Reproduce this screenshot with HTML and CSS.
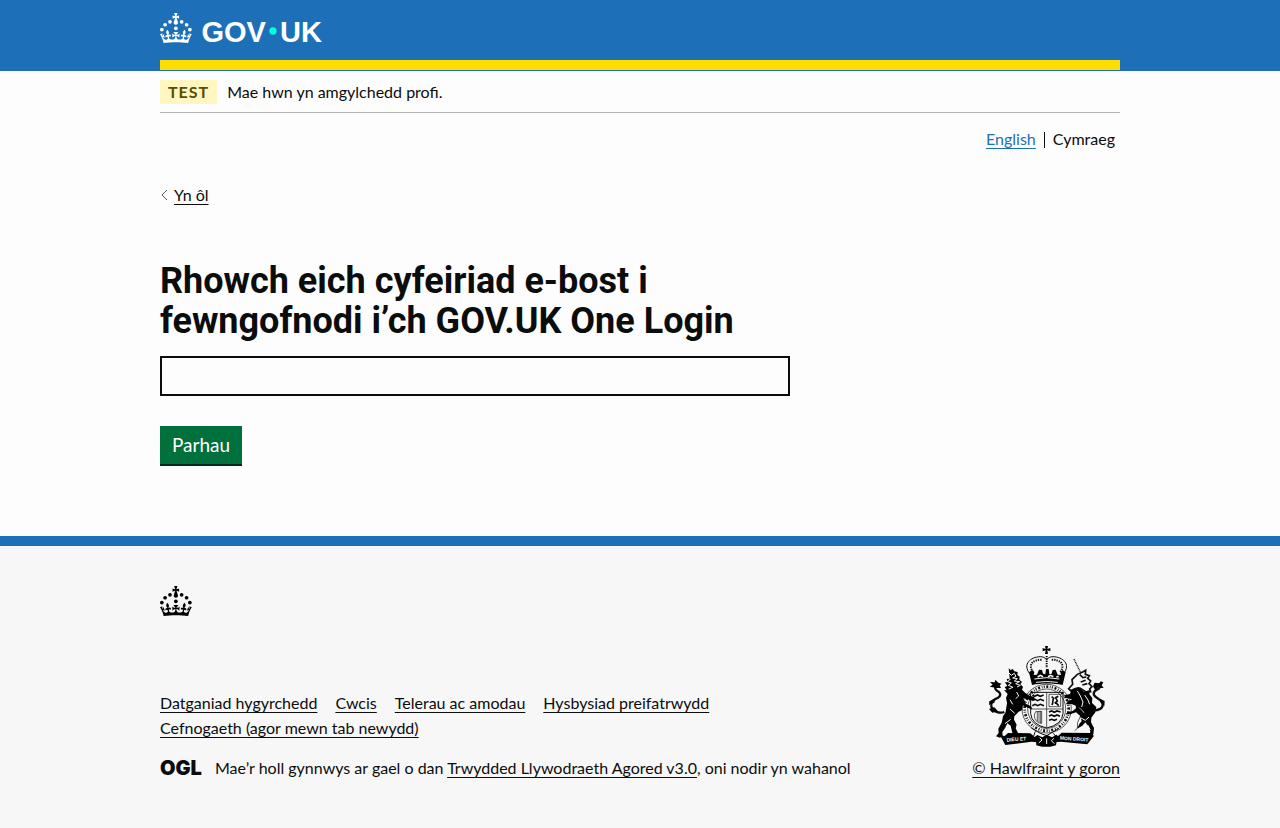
FILE: index.html
```html
<!DOCTYPE html>
<html lang="cy">
<head>
<meta charset="utf-8">
<meta name="viewport" content="width=device-width, initial-scale=1">
<title>Rhowch eich cyfeiriad e-bost - GOV.UK One Login</title>
<link rel="stylesheet" href="styles.css">
</head>
<body>
<svg class="symbols" aria-hidden="true">
  <symbol id="crown" viewBox="0 0 64 60">
    <circle cx="20" cy="17.6" r="3.7"/><circle cx="10.2" cy="23.5" r="3.7"/><circle cx="3.7" cy="33.2" r="3.7"/><circle cx="31.7" cy="30.6" r="3.7"/><circle cx="43.3" cy="17.6" r="3.7"/><circle cx="53.2" cy="23.5" r="3.7"/><circle cx="59.7" cy="33.2" r="3.7"/>
    <path d="M33.1,9.8c.2-.1.3-.3.5-.5l4.6,2.4v-6.8l-4.6,1.5c-.1-.2-.3-.3-.5-.5l1.9-5.9h-6.7l1.9,5.9c-.2.1-.3.3-.5.5l-4.6-1.5v6.8l4.6-2.4c.1.2.3.3.5.5l-2.6,8c-.9,2.8,1.2,5.7,4.1,5.7h0c3,0,5.1-2.9,4.1-5.7l-2.6-8ZM37,37.9s-3.4,3.8-4.1,6.1c2.2,0,4.2-.5,6.4-2.8l-.7,8.5c-2-2.8-4.4-4.1-5.7-3.8.1,3.1.5,6.7,5.8,7.2,3.7.3,6.7-1.5,7-3.8.4-2.6-2-4.3-3.7-1.6-1.4-4.5,2.4-6.1,4.9-3.2-1.9-4.5-1.8-7.7,2.4-10.9,3,4,2.6,7.3-1.2,11.1,2.4-1.3,6.2,0,4,4.6-1.2-2.8-3.7-2.2-4.2.2-.3,1.7.7,3.7,3,4.2,1.9.3,4.7-.9,7-5.9-1.3,0-2.4.7-3.9,1.7l2.4-8c.6,2.3,1.4,3.7,2.2,4.5.6-1.6.5-2.8,0-5.3l5,1.8c-2.6,3.6-5.2,8.7-7.3,17.5-7.4-1.1-15.7-1.7-24.5-1.7h0c-8.8,0-17.1.6-24.5,1.7-2.1-8.9-4.7-13.9-7.3-17.5l5-1.8c-.5,2.5-.6,3.7,0,5.3.8-.8,1.6-2.3,2.2-4.5l2.4,8c-1.5-1-2.6-1.7-3.9-1.7,2.3,5,5.2,6.2,7,5.9,2.3-.4,3.3-2.4,3-4.2-.5-2.4-3-3.1-4.2-.2-2.2-4.6,1.6-6,4-4.6-3.7-3.7-4.2-7.1-1.2-11.1,4.2,3.2,4.3,6.4,2.4,10.9,2.5-2.8,6.3-1.3,4.9,3.2-1.8-2.7-4.1-1-3.7,1.6.3,2.3,3.3,4.1,7,3.8,5.4-.5,5.7-4.2,5.8-7.2-1.3-.2-3.7,1-5.7,3.8l-.7-8.5c2.2,2.3,4.2,2.7,6.4,2.8-.7-2.3-4.1-6.1-4.1-6.1h10.6Z"/>
  </symbol>
</svg>
<header class="header">
  <div class="container header-inner">
    <a class="header-link" href="#" aria-label="GOV.UK">
      <svg class="logo" viewBox="0 0 324 60">
        <use href="#crown" width="64" height="60"/>
        <text class="logo-text" x="83" y="57">GOV</text>
        <circle class="logo-dot" cx="226" cy="36" r="7.3"/>
        <text class="logo-text" x="240" y="57">UK</text>
      </svg>
    </a>
  </div>
</header>
<div class="container">
  <div class="phase">
    <strong class="tag">TEST</strong>
    <span>Mae hwn yn amgylchedd profi.</span>
  </div>
  <nav class="languages" aria-label="Dewis iaith">
    <a class="language" href="#" lang="en">English</a>
    <span class="language language-current">Cymraeg</span>
  </nav>
  <a class="back" href="#">
    <svg class="back-icon" viewBox="0 0 8 12" aria-hidden="true"><path d="M7 1 2 6l5 5"/></svg>
    <span class="link">Yn ôl</span>
  </a>
  <main class="main">
    <form>
      <h1 class="title"><label for="email">Rhowch eich cyfeiriad e-bost i fewngofnodi i’ch GOV.UK One Login</label></h1>
      <input class="input" id="email" name="email" type="email">
      <button class="button" type="button">Parhau</button>
    </form>
  </main>
</div>
<footer class="footer">
  <div class="container">
    <svg class="footer-crown" aria-hidden="true"><use href="#crown"/></svg>
    <div class="meta">
      <div class="meta-main">
        <ul class="links">
          <li><a class="link" href="#">Datganiad hygyrchedd</a></li>
          <li><a class="link" href="#">Cwcis</a></li>
          <li><a class="link" href="#">Telerau ac amodau</a></li>
          <li><a class="link" href="#">Hysbysiad preifatrwydd</a></li>
          <li><a class="link" href="#">Cefnogaeth (agor mewn tab newydd)</a></li>
        </ul>
        <div class="licence">
          <span class="ogl">OGL</span>
          <span>Mae’r holl gynnwys ar gael o dan <a class="link" href="#">Trwydded Llywodraeth Agored v3.0</a>, oni nodir yn wahanol</span>
        </div>
      </div>
      <div class="copyright">
        <svg class="arms" viewBox="18 15 375 306" aria-hidden="true">
          <!-- crown -->
          <path d="M201 18h9l-2 9 9-3v10l-9-3 2 11h-9l2-11-9 3V24l9 3z"/>
          <path class="line" d="M155 101C133 72 157 51 187 50c8 0 14 3 19 9 5-6 11-9 19-9 30 1 54 22 32 51"/>
          <path class="dots" d="M165 96c-16-24 1-37 26-37M247 96c16-24-1-37-26-37M206 48v36"/>
          <path d="m153 97 9-7 7 7-2 8 10-1 6-15 9 1 3 11 7 2 2-16h8l2 16 7-2 3-11 9-1 6 15 10 1-2-8 7-7 9 7-9 38c-27-6-65-6-92 0z"/>
          <path class="light" d="M169 117q37-8 75 0M174 127q33-5 65 0"/>
          <path class="gaps" d="m179 111 8-5 8 4m15 0 8-4 8 4m9 1 7-2"/>
          <!-- garter and shield -->
          <ellipse class="garter" cx="206" cy="206" rx="74" ry="73"/>
          <ellipse class="garter-text" cx="206" cy="206" rx="66" ry="66"/>
          <ellipse class="thin" cx="206" cy="206" rx="57" ry="59"/>
          <path class="shield" d="M158 157h97v64q-3 33-49 43-45-10-48-43z"/>
          <path class="thin" d="M206 157v105M158 207h97"/>
          <path class="charge" d="m163 166 7 3 8-4 9 4 10-4M163 181l8-3 8 4 8-4 11 4M163 197l8-4 8 4 8-4 11 4"/>
          <path class="thin" d="M213 163h35v37h-35z"/>
          <path class="charge" d="M222 195c4-8 1-14 5-20l-6-5m9 20 8-7-5-10 8-4M233 187l9 10"/>
          <path class="thin" d="M173 215c-5 8-5 17 0 26q7 9 18 9v-36zM178 215v29m5-30v33m5-33v36"/>
          <path class="charge" d="m213 216 8-3 8 4 8-4 11 3M213 228l8-3 8 4 8-4 9 4M213 241l8-3 8 3 8-3"/>
          <!-- lion -->
          <path d="m92 84 6 7 6-5 5 8 10 2-1 9 7 5-1 9 8 7-5 6 8 9-3 8 10 10 14 9 12 3 4 9-8 2-19-5-9-3 8 18 15 7 4 8-11-2-18-9-1 14-11 5-13 14-1 10 8 15-3 11 9 18 9 8-11 5-14-7-5-19-3-13-10-7-7 15-8 11 1 12-8 5-12-4 8-10-1-13 10-18 4-19 8-13 4-28-3-14 5-12-11-12 8 1-6-10 8-3-7-11 8-1-3-10 9-1z"/>
          <path class="light" d="m93 99 7 7 9-6 5 9-10 5 14 2-9 7 16 2-12 6 14 5-10 5m-32-42 8 9-7 6 11 4-9 7 12 4-9 7 14 6-13 5m24 9 6 12-9 8m-17 3 8 14m-8 14 14 13m-12 18-17 13m5-65-8 25"/>
          <path class="tail" d="M79 216c-14 5-35-1-39-16-3-17 8-20 20-27 11-7 7-16-2-20-8-5-9-13-2-20"/>
          <path d="M56 144 35 140l9-6-8-8 14 1 2-8 9 9 10 3-6 5 4 8zM34 184l18-9-3 13-16 7zM33 207l16-5 11 12-17 4z"/>
          <!-- unicorn -->
          <path class="horn" d="m288 57 21 43"/>
          <path class="charge" d="m282 119 16-16 16-7 9-5-1 12 12 4-5 8 9 8-5 8 9 9-7 7 3 8-14 1-18-12-14 2-14 6-6-6 12-13z"/>
          <path class="charge" d="m305 104 10 9 10-2m-17 15 15-5m-10 14 15-4"/>
          <path d="m280 150 21-9 17 14 18-5-2 13 9 11-1 15 13 12-3 16-12 16-1 14 9 17-2 19-13 8 4-16-4-13-11-15-9 10-16 9 7-14 7-9-5-16-12-10-17 6-15 0 7-6 15-4 10-8-1-8-12-5-17 1 5-10 14-5-24-5 1-7 16-4z"/>
          <path class="light" d="m298 153 9 15 8 18-4 15m9-36 10 15 5 13m-31 10 14 15m-9 16 13 7 11-10m-4 24 8 15"/>
          <path class="thin" d="M292 150c14 13 8 32 10 48l11 18-14 31-1 18-8 7"/>
          <path class="tail" d="M345 211c15 1 29-5 29-17 0-14-14-17-22-24-9-8-4-17 5-21 9-3 11-10 4-16"/>
          <path d="m345 139 5-11 14 2 4-6 8 3-5 9 6 8-19-1-5 9zM366 176l14 7-1 16-12-12z"/>
          <!-- motto and plinth -->
          <path d="M66 286l14 2 10-9 67 1 14 12 7 15-17-2-79 10zM344 279l-93-1-15 14-6 15 18-2 80 8 19-24z"/>
          <text class="motto" transform="rotate(-4 86 306)" x="86" y="305">DIEU ET</text>
          <text class="motto" transform="rotate(4 247 300)" x="245" y="299">MON DROIT</text>
          <path class="line" d="m160 264 27 16 19 7 37-22M172 274l-5 14m59-8 9 11"/>
          <path d="m166 294 12-9 15 7 13-8 16 8 13-8 12 10-11 10-2 12-17 4h-25l-17-4-1-12z"/>
          <path class="light" d="m185 293 7 7-10 9m24-14v17m22-17-8 7 9 9"/>
        </svg>
        <a class="link" href="#">© Hawlfraint y goron</a>
      </div>
    </div>
  </div>
</footer>
</body>
</html>
```
FILE: styles.css
```css
* { box-sizing: border-box; }
body {
  margin: 0;
  background: #fdfdfd;
  color: #0b0c0c;
  font: 16px/20px Lato, "Liberation Sans", sans-serif;
}
.symbols { position: absolute; width: 0; height: 0; }
.container { max-width: 960px; margin: 0 auto; }
.header { background: #1d70b8; padding-bottom: 1px; }
.header-inner { padding-top: 13px; border-bottom: 10px solid #ffdd00; }
.header-link { display: block; width: 162px; height: 47px; color: #fff; }
.logo { display: block; width: 162px; height: 30px; fill: currentColor; overflow: visible; }
.logo-text { font: bold 58px "Liberation Sans", sans-serif; }
.logo-dot { fill: #00ffe0; }
.phase {
  display: flex;
  align-items: center;
  gap: 10px;
  padding: 9px 0 8px;
  border-bottom: 1px solid #b1b4b6;
}
.tag {
  padding: 2px 8px;
  background: #fff7bf;
  color: #594d00;
  letter-spacing: 1px;
}
.languages { display: flex; justify-content: flex-end; padding: 16px 5px 0 0; }
.language { color: #1d70b8; text-underline-offset: 3px; text-decoration-skip-ink: none; }
.language-current { position: relative; margin-left: 8px; padding-left: 9px; color: #0b0c0c; }
.language-current::before { content: ""; position: absolute; left: 0; top: 3px; bottom: 1px; border-left: 1px solid #0b0c0c; }
.back { display: flex; width: fit-content; align-items: center; gap: 6px; margin-top: 36px; color: #0b0c0c; text-decoration: none; }
.back-icon { width: 8px; height: 12px; fill: none; stroke: #505a5f; stroke-width: 1; }
.main { max-width: 630px; padding: 56px 0 70px; }
.title { margin: 0 0 15px; font: bold 36px/40px Roboto, sans-serif; }
.input { display: block; width: 100%; height: 40px; padding: 5px; border: 2px solid #0b0c0c; border-radius: 0; background: transparent; font: inherit; }
.button {
  display: block;
  margin-top: 30px;
  padding: 9px 12px 10px;
  border: 0;
  border-bottom: 2px solid #002d18;
  background: #00703c;
  color: #fff;
  font: 19px/19px Lato, sans-serif;
}
.footer { border-top: 10px solid #1d70b8; padding: 40px 0 50px; background: #f7f7f7; }
.footer-crown { display: block; width: 32px; height: 30px; }
.meta { display: flex; flex-wrap: wrap; align-items: flex-end; justify-content: space-between; margin-top: 29px; }
.links { display: flex; flex-wrap: wrap; gap: 5px 18px; max-width: 680px; margin: 0 0 20px; padding: 0; list-style: none; }
.link { color: #0b0c0c; text-decoration: underline; text-decoration-thickness: 1px; text-underline-offset: 3px; text-decoration-skip-ink: none; }
.licence { display: flex; align-items: center; gap: 13px; }
.ogl { font: 900 20px/20px Inter, sans-serif; }
.copyright { display: flex; flex-direction: column; align-items: center; gap: 11px; }
.arms { display: block; width: 125px; height: 102px; }
.arms .line, .arms .thin, .arms .charge, .arms .tail, .arms .horn, .arms .garter, .arms .garter-text, .arms .dots, .arms .shield { fill: none; stroke: #0b0c0c; }
.arms .line { stroke-width: 3; }
.arms .thin { stroke-width: 2; }
.arms .charge { stroke-width: 5; }
.arms .tail { stroke-width: 7; }
.arms .horn { stroke-width: 4; stroke-dasharray: 3 2; }
.arms .dots { stroke-width: 6; stroke-dasharray: 4 3; }
.arms .garter { stroke-width: 2; fill: #f7f7f7; }
.arms .garter-text { stroke-width: 8; stroke-dasharray: 3 5 6 5 2 4; }
.arms .shield { stroke-width: 3; }
.arms .light, .arms .gaps { fill: none; stroke: #f7f7f7; stroke-width: 3; }
.arms .gaps { stroke-width: 5; }
.motto { fill: #f7f7f7; font: bold 15px "Liberation Sans", sans-serif; }
```
